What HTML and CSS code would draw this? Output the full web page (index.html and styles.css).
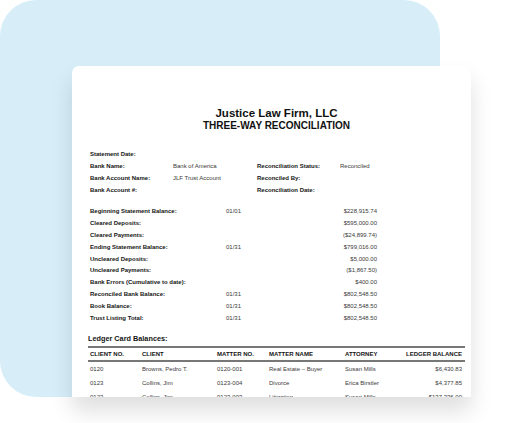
FILE: index.html
```html
<!DOCTYPE html>
<html>
<head>
<meta charset="utf-8">
<link rel="stylesheet" href="styles.css">
</head>
<body>
<div class="stage">
  <div class="backdrop"></div>
  <div class="card">
    <div class="doc">
      <div class="title">Justice Law Firm, LLC</div>
      <div class="subtitle">THREE-WAY RECONCILIATION</div>

      <div class="info">
        <div class="lbl">Statement Date:</div><div class="val"></div><div class="lbl"></div><div class="val"></div>
        <div class="lbl">Bank Name:</div><div class="val">Bank of America</div><div class="lbl">Reconciliation Status:</div><div class="val">Reconciled</div>
        <div class="lbl">Bank Account Name:</div><div class="val">JLF Trust Account</div><div class="lbl">Reconciled By:</div><div class="val"></div>
        <div class="lbl">Bank Account #:</div><div class="val"></div><div class="lbl">Reconciliation Date:</div><div class="val"></div>
      </div>

      <div class="bal">
        <div class="lbl">Beginning Statement Balance:</div><div class="val">01/01</div><div class="amt">$228,915.74</div>
        <div class="lbl">Cleared Deposits:</div><div class="val"></div><div class="amt">$595,000.00</div>
        <div class="lbl">Cleared Payments:</div><div class="val"></div><div class="amt">($24,899.74)</div>
        <div class="lbl">Ending Statement Balance:</div><div class="val">01/31</div><div class="amt">$799,016.00</div>
        <div class="lbl">Uncleared Deposits:</div><div class="val"></div><div class="amt">$5,000.00</div>
        <div class="lbl">Uncleared Payments:</div><div class="val"></div><div class="amt">($1,867.50)</div>
        <div class="lbl">Bank Errors (Cumulative to date):</div><div class="val"></div><div class="amt">$400.00</div>
        <div class="lbl">Reconciled Bank Balance:</div><div class="val">01/31</div><div class="amt">$802,548.50</div>
        <div class="lbl">Book Balance:</div><div class="val">01/31</div><div class="amt">$802,548.50</div>
        <div class="lbl">Trust Listing Total:</div><div class="val">01/31</div><div class="amt">$802,548.50</div>
      </div>

      <div class="ledger-title">Ledger Card Balances:</div>
      <table class="ledger">
        <colgroup>
          <col class="c1"><col class="c2"><col class="c3"><col class="c4"><col class="c5"><col class="c6">
        </colgroup>
        <thead>
          <tr><th>CLIENT NO.</th><th>CLIENT</th><th>MATTER NO.</th><th>MATTER NAME</th><th>ATTORNEY</th><th class="r">LEDGER BALANCE</th></tr>
        </thead>
        <tbody>
          <tr><td>0120</td><td>Browns, Pedro T.</td><td>0120-001</td><td>Real Estate – Buyer</td><td>Susan Mills</td><td class="r">$6,430.83</td></tr>
          <tr><td>0123</td><td>Collins, Jim</td><td>0123-004</td><td>Divorce</td><td>Erica Birstler</td><td class="r">$4,377.85</td></tr>
          <tr><td>0123</td><td>Collins, Jim</td><td>0123-003</td><td>Litigation</td><td>Susan Mills</td><td class="r">$137,336.00</td></tr>
        </tbody>
      </table>
    </div>
  </div>
</div>
</body>
</html>
```
FILE: styles.css
```css
html, body {
  margin: 0;
  padding: 0;
  background: #ffffff;
}
body {
  font-family: "Liberation Sans", Arial, sans-serif;
  width: 517px;
  height: 423px;
  overflow: hidden;
}
.stage {
  display: grid;
  width: 517px;
  height: 423px;
}
.backdrop {
  grid-area: 1 / 1;
  width: 440px;
  height: 397px;
  background: #d7eef9;
  border-radius: 36px;
}
.card {
  grid-area: 1 / 1;
  margin-left: 72px;
  margin-top: 66px;
  width: 399px;
  height: 331px;
  background: #ffffff;
  border-radius: 7px 7px 0 0;
  overflow: hidden;
  box-shadow: 0 14px 22px rgba(0, 0, 0, 0.13);
  align-self: start;
}
.doc {
  padding: 40px 6px 0 16px;
  color: #1a1a1a;
}
.title {
  text-align: center;
  font-weight: bold;
  font-size: 11.5px;
  line-height: 14px;
  color: #111;
}
.subtitle {
  text-align: center;
  font-weight: bold;
  font-size: 10px;
  line-height: 12px;
  color: #111;
}
.info {
  margin-top: 16px;
  padding-left: 2px;
  display: grid;
  grid-template-columns: 83px 84px 83px 1fr;
  grid-auto-rows: 12px;
  align-items: center;
}
.bal {
  margin-top: 9px;
  padding-left: 2px;
  display: grid;
  grid-template-columns: 136px 60px 91px;
  grid-auto-rows: 11.9px;
  align-items: center;
}
.lbl {
  font-weight: bold;
  font-size: 6px;
  line-height: 8px;
  color: #151515;
  white-space: nowrap;
}
.val {
  font-size: 6px;
  line-height: 8px;
  color: #3a3a3a;
  white-space: nowrap;
}
.amt {
  font-size: 6px;
  line-height: 8px;
  color: #3a3a3a;
  text-align: right;
  white-space: nowrap;
}
.ledger-title {
  margin-top: 10px;
  font-weight: bold;
  font-size: 7.3px;
  line-height: 10px;
  color: #151515;
}
.ledger {
  margin-top: 2px;
  width: 377px;
  border-collapse: collapse;
  table-layout: fixed;
}
.c1 { width: 52px; }
.c2 { width: 75px; }
.c3 { width: 52px; }
.c4 { width: 76px; }
.c5 { width: 57px; }
.c6 { width: 65px; }
.ledger thead tr {
  border-top: 2px solid #777;
  border-bottom: 2px solid #777;
}
.ledger th {
  height: 12px;
  padding: 0 0 0 2px;
  text-align: left;
  font-weight: bold;
  font-size: 6px;
  line-height: 8px;
  color: #151515;
  white-space: nowrap;
}
.ledger td {
  height: 14px;
  padding: 0 0 0 2px;
  font-size: 6px;
  line-height: 8px;
  color: #3a3a3a;
  white-space: nowrap;
}
.ledger .r {
  text-align: right;
  padding: 0 3px 0 0;
}
```
